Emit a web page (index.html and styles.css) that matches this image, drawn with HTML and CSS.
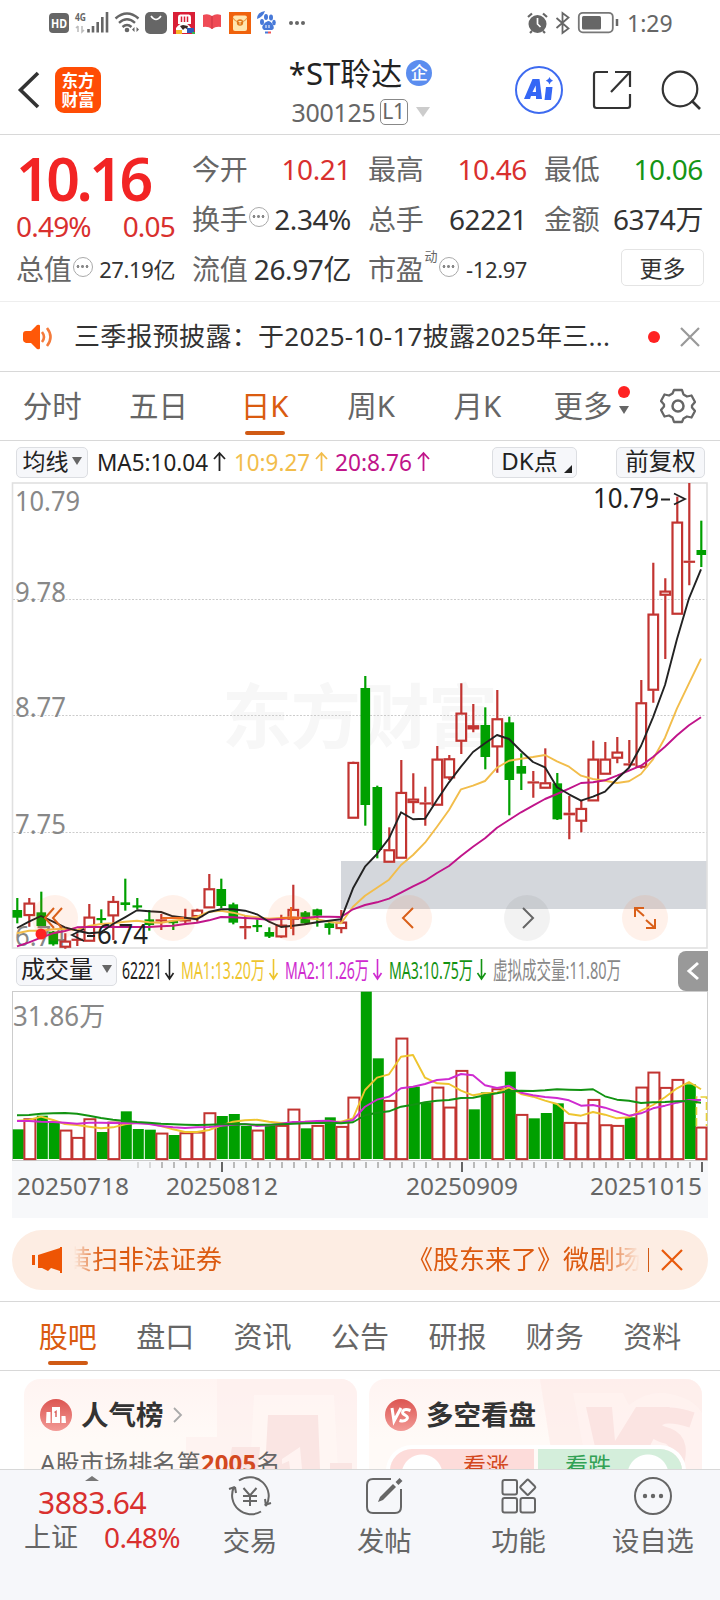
FILE: index.html
```html
<!DOCTYPE html>
<html lang="zh-CN">
<head>
<meta charset="utf-8">
<title>*ST聆达 300125</title>
<link rel="stylesheet" href="styles.css">
</head>
<body>
<div class="statusbar">
  <svg class="status-left" width="260" height="30" viewBox="48 8 260 30">
    <rect x="49" y="13" width="20" height="20" rx="4" fill="#666"/>
    <text x="51" y="28" font-size="13" font-weight="700" fill="#fff" textLength="16" lengthAdjust="spacingAndGlyphs">HD</text>
    <text x="75" y="21" font-size="11" font-weight="700" fill="#666" textLength="11" lengthAdjust="spacingAndGlyphs">4G</text>
    <path d="M78 26v6m-2-4l2-2M82 26v6l2-2" stroke="#bbb" stroke-width="1.5" fill="none"/>
    <path d="M88.500 29v3.500M93 26v6.500M97.700 22v10.500M102.300 17v15.500M107 12v20.500" stroke="#666" stroke-width="2.600"/>
    <path d="M115.500 18.500q11.500-10 23 0M119 22.800q8-7 16 0M122.500 27q4.500-4 9 0" fill="none" stroke="#666" stroke-width="2.400"/>
    <circle cx="127" cy="30" r="2.300" fill="#666"/>
    <path d="M134.500 27v5l-2.500-2.500zM136.500 27v5l2.500-2.500z" fill="#666"/>
    <rect x="145" y="12" width="22" height="22" rx="5" fill="#666"/>
    <path d="M151 16q5 7 10 0" fill="none" stroke="#fff" stroke-width="1.600"/>
    <rect x="173" y="12" width="22" height="22" fill="#d91f36"/>
    <path d="M178 17q0-3 3-2.500h7q3-.5 3 2.500v7h-13z" fill="#fff"/><path d="M181.500 16.500v5.500m3-5.500v5.500m3-5.500v5.500" stroke="#d91f36" stroke-width="1.500"/>
    <path d="M176 28q8-10 15 0v5h-15z" fill="#fff"/><path d="M180 26l3-1 5 1-1 3-2-1-2 2z" fill="#3b2a26"/>
    <path d="M176 30h6v4h-6z" fill="#f7ba2a"/><path d="M187 28h7v5h-7z" fill="#2e5bb8"/><path d="M192 32h3v2h-3z" fill="#3cb44b"/>
    <path d="M203 15q5-2 9 1q4-3 9-1v12q-5-1-9 2q-4-3-9-2z" fill="#ef4b56"/><path d="M212 16v13" stroke="#c93542"/>
    <rect x="229" y="12" width="22" height="22" fill="#f0620c"/><rect x="233" y="15.500" width="14" height="15.500" rx="2" fill="#ffe6b0"/>
    <path d="M233 18q3 4 5 3.500M247 18q-3 4-5 3.500" fill="none" stroke="#e59a4a" stroke-width="1.200"/><circle cx="240" cy="22.500" r="3.200" fill="#e07a1c"/><path d="M238.500 21.500h3m-1.500 0v3" stroke="#ffe6b0"/>
    <g fill="#4779d8"><ellipse cx="262" cy="22" rx="2" ry="3"/><ellipse cx="266" cy="17" rx="2" ry="3"/><ellipse cx="271" cy="17.500" rx="2" ry="3"/><ellipse cx="274" cy="22.500" rx="1.800" ry="2.800"/><path d="M268 21q3 0 5 4t-1 5h-8q-3-2-1-5t5-4z"/><path d="M257 19q0-7 8-8q-2 6-8 8z"/></g>
    <path d="M266 25v3m3-3v3" stroke="#fff"/><path d="M265 32.500h3" stroke="#4779d8" stroke-width="2"/><path d="M268 32.500h3" stroke="#e55" stroke-width="2"/>
    <g fill="#666"><circle cx="291" cy="23" r="2"/><circle cx="297" cy="23" r="2"/><circle cx="303" cy="23" r="2"/></g>
  </svg>
  <svg class="status-right" width="96" height="26" viewBox="525 10 96 26">
    <circle cx="537.500" cy="24" r="9" fill="#666"/><path d="M537.500 18v6l3 3" fill="none" stroke="#fff" stroke-width="1.700"/>
    <path d="M528 17l4-3.500M547 17l-4-3.500M532 31l-2 2M543 31l2 2" stroke="#666" stroke-width="2.200"/>
    <path d="M556.500 18l12 10.500-6 4.500v-20l6 4.500-12 10.500" fill="none" stroke="#666" stroke-width="1.800"/>
    <rect x="578.800" y="12.800" width="34" height="19.500" rx="4" fill="none" stroke="#777" stroke-width="1.800"/><rect x="582" y="16" width="19" height="13.500" rx="1.500" fill="#666"/><path d="M617 19v7" stroke="#666" stroke-width="2.500"/>
  </svg>
  <span class="clock">1:29</span>
</div>

<header class="header">
  <svg class="back" width="24" height="38" viewBox="0 0 24 38"><path d="M22 2L4.500 19 22 36" fill="none" stroke="#333" stroke-width="3.600"/></svg>
  <div class="logo"><span>东方</span><span>财富</span></div>
  <div class="title">
    <div class="name">*ST聆达<span class="badge">企</span></div>
    <div class="code">300125<span class="level">L1</span><i class="caret"></i></div>
  </div>
  <div class="actions">
    <svg width="48" height="48" viewBox="0 0 48 48"><circle cx="24" cy="24" r="23" fill="none" stroke="#3e6bf0" stroke-width="2"/><path d="M9 33L17.500 13h7L27 33h-6v-3h-5l-1 3zM17.500 26h3.500l-.3-6.500z" fill="#3567f5" fill-rule="evenodd"/><path d="M31 21h6.500l-1.500 13h-6.500z" fill="#3567f5"/><path d="M34.500 11q.8 3 3.500 3.800-2.700.8-3.500 3.700-.8-2.900-3.700-3.700 2.900-.8 3.700-3.800z" fill="#3567f5"/></svg>
    <svg width="40" height="40" viewBox="0 0 40 40"><path d="M16 2H4.500Q2 2 2 4.500v31Q2 38 4.500 38h31q2.500 0 2.500-2.500V24M23 2h15v15M38 2L19 22" fill="none" stroke="#333" stroke-width="2.200"/></svg>
    <svg width="40" height="40" viewBox="0 0 40 40"><circle cx="19" cy="19" r="17.300" fill="none" stroke="#333" stroke-width="2.200"/><path d="M30.500 30.500l8.500 8.500" stroke="#333" stroke-width="2.600"/></svg>
  </div>
</header>

<section class="quote">
  <div class="last">
    <div class="price">10.16</div>
    <div class="change up"><span>0.49%</span><span>0.05</span></div>
  </div>
  <div class="cell"><label>今开</label><b class="up">10.21</b></div>
  <div class="cell"><label>最高</label><b class="up">10.46</b></div>
  <div class="cell"><label>最低</label><b class="down">10.06</b></div>
  <div class="cell"><label>换手</label><i class="info"></i><b>2.34%</b></div>
  <div class="cell"><label>总手</label><b>62221</b></div>
  <div class="cell"><label>金额</label><b>6374万</b></div>
  <div class="cell"><label>总值</label><i class="info"></i><b class="small">27.19亿</b></div>
  <div class="cell"><label>流值</label><b>26.97亿</b></div>
  <div class="cell"><label>市盈</label><sup>动</sup><i class="info"></i><b class="small">-12.97</b></div>
  <div class="cell end"><button class="more">更多</button></div>
</section>

<section class="notice">
  <svg width="32" height="26" viewBox="0 0 32 26"><path d="M4 7h5l6-6q3-1 3 1v22q0 2-3 1l-6-6H4q-3-1-3-3v-6q0-3 3-3z" fill="#ff5808"/><path d="M20 8q4 5 0 10M25 4q7 9 0 18" fill="none" stroke="#f47a3b" stroke-width="2.600"/></svg>
  <p>三季报预披露：于2025-10-17披露2025年三...</p>
  <i class="dot"></i>
  <svg class="close" width="20" height="20" viewBox="0 0 20 20"><path d="M1 1l18 18M19 1L1 19" stroke="#999" stroke-width="2.200"/></svg>
</section>

<nav class="periods">
  <a>分时</a><a>五日</a><a class="active">日K</a><a>周K</a><a>月K</a>
  <a class="menu">更多<span class="mark"><i class="dot"></i><i class="caret"></i></span></a>
  <svg width="36" height="36" viewBox="-18 -18 36 36"><path d="M-4-16h8l1.500 4.500 3.500 2 4.500-1 3.500 6.500-3 3.500v2l3 3.500-3.500 6.500-4.500-1-3.500 2L4 16h-8l-1.500-4.500-3.500-2-4.500 1-3.500-6.500 3-3.500v-2l-3-3.500 3.500-6.500 4.500 1 3.500-2z" fill="none" stroke="#666" stroke-width="2.300" stroke-linejoin="round"/><circle r="5.500" fill="none" stroke="#666" stroke-width="2.500"/></svg>
</nav>

<div class="maline">
  <button class="chip">均线<i class="caret"></i></button>
  <svg class="ma" width="336" height="32" viewBox="97 446 336 32" font-size="24">
    <text x="97" y="470" fill="#222" textLength="111" lengthAdjust="spacingAndGlyphs">MA5:10.04</text>
    <text x="234" y="470" fill="#f2bd4b" textLength="76" lengthAdjust="spacingAndGlyphs">10:9.27</text>
    <text x="335" y="470" fill="#c0148a" textLength="77" lengthAdjust="spacingAndGlyphs">20:8.76</text>
    <g fill="none" stroke-width="1.800"><path d="M219.500 470v-18m-5.500 6l5.500-6 5.500 6" stroke="#222"/><path d="M321.500 470v-18m-5.500 6l5.500-6 5.500 6" stroke="#f2bd4b"/><path d="M423.500 470v-18m-5.500 6l5.500-6 5.500 6" stroke="#c0148a"/></g>
  </svg>
  <button class="chip dk">DK点<i class="corner"></i></button>
  <button class="chip fq">前复权</button>
</div>

<svg class="price-chart" id="price" width="720" height="468" viewBox="0 482 720 468"></svg>

<div class="volline">
  <button class="chip">成交量<i class="caret"></i></button>
  <svg width="502" height="32" viewBox="122 954 502 32" font-size="24">
    <text x="122" y="978" fill="#222" textLength="40" lengthAdjust="spacingAndGlyphs">62221</text>
    <text x="181" y="978" fill="#eec52e" textLength="84" lengthAdjust="spacingAndGlyphs">MA1:13.20万</text>
    <text x="285" y="978" fill="#cf2bd0" textLength="84" lengthAdjust="spacingAndGlyphs">MA2:11.26万</text>
    <text x="389" y="978" fill="#129312" textLength="84" lengthAdjust="spacingAndGlyphs">MA3:10.75万</text>
    <text x="493" y="978" fill="#888" textLength="128" lengthAdjust="spacingAndGlyphs">虚拟成交量:11.80万</text>
    <g fill="none" stroke-width="1.600"><path d="M169.500 958v20m-4-6l4 6 4-6" stroke="#222"/><path d="M273.500 958v20m-4-6l4 6 4-6" stroke="#eec52e"/><path d="M377.500 958v20m-4-6l4 6 4-6" stroke="#cf2bd0"/><path d="M481.500 958v20m-4-6l4 6 4-6" stroke="#129312"/></g>
  </svg>
  <div class="drawer"><svg width="14" height="20" viewBox="0 0 14 20"><path d="M12 2L3 10l9 8" fill="none" stroke="#fff" stroke-width="3"/></svg></div>
</div>

<svg class="vol-chart" id="volume" width="720" height="227" viewBox="0 991 720 227"></svg>

<section class="banner">
  <svg width="30" height="26" viewBox="0 0 30 26"><path d="M0 8h3v10H0zM6 8L28 1V0h3v26h-3v-2l-9-3-3 3-6-3H6z" fill="#ee5504"/></svg>
  <div class="marquee"><span>黄扫非法证券</span><span>《股东来了》微剧场</span></div>
  <i class="bar"></i>
  <svg width="22" height="22" viewBox="0 0 22 22"><path d="M1 1l20 20M21 1L1 21" stroke="#e8590c" stroke-width="2.200"/></svg>
</section>

<nav class="sections"><a class="active">股吧</a><a>盘口</a><a>资讯</a><a>公告</a><a>研报</a><a>财务</a><a>资料</a></nav>

<main class="cards">
  <article class="card">
    <svg class="art" width="333" height="90" viewBox="0 0 333 90"><path d="M193 0h140v90H162V58h31z" fill="#fdeeec" opacity=".6"/><path d="M230 16h80l4 74h-88z" fill="#fff6f4" opacity=".8"/><path d="M244 36h50l2 54h-55zM208 68h28l-2 22h-30zM306 84h22v6h-22z" fill="#fae5e3"/><path d="M258 80l18-12 2 22h-12l-1-8-7 3z" fill="#fff3f1"/></svg>
    <h3><svg width="32" height="32" viewBox="0 0 32 32"><defs><linearGradient id="g" x2="0" y2="1"><stop stop-color="#dc5551"/><stop offset="1" stop-color="#f29a96"/></linearGradient></defs><circle cx="16" cy="16" r="16" fill="url(#g)"/><path d="M6.500 13h4v11h-4.500zM12 8h8v16h-8zM21.500 17h4l.5 7h-4.500z" fill="#fff"/><path d="M14.500 13.500l1.500-1v5.500" fill="none" stroke="#dc6662" stroke-width="1.500"/></svg>人气榜<svg width="10" height="16" viewBox="0 0 10 16"><path d="M1 1l7 7-7 7" fill="none" stroke="#aaa" stroke-width="1.800"/></svg></h3>
    <p>A股市场排名第<strong>2005</strong>名</p>
  </article>
  <article class="card">
    <svg class="art" width="333" height="90" viewBox="0 0 333 90"><path d="M171 0h162v90H185z" fill="#fdecea" opacity=".75"/><path d="M204 14h50l6 12q18-14 36-12 28 4 37 20v56H218z" fill="#fff3f1" opacity=".6"/><path d="M217 28h26l3 34 21-34h34l-32 62h-38z" fill="#fbe4e2"/><path d="M323 41q-30-10-38 2-3 10 14 14 16 6 6 33" fill="none" stroke="#fbe4e2" stroke-width="16"/></svg>
    <h3><svg width="32" height="32" viewBox="0 0 32 32"><circle cx="16" cy="16" r="16" fill="url(#g)"/><path d="M7 9l2 13L16 9M25.500 11.500q-6-2-7.500.5t2 4q4 2 1.500 4.500t-7 1" fill="none" stroke="#fff" stroke-width="3"/></svg>多空看盘</h3>
    <div class="vote"><span class="rise">看涨</span><span class="fall">看跌</span></div>
  </article>
</main>

<footer class="dock">
  <div class="index"><i class="tri"></i><div class="pt">3883.64</div><div class="line"><span>上证</span><em>0.48%</em></div></div>
  <a><svg width="44" height="40" viewBox="-22 -20 44 40" fill="none" stroke="#666" stroke-width="2"><path d="M-11-15.500A19 19 0 0 1 16 10m-1.500-1l6.500-2M16 10l-1-7M11 15.500A19 19 0 0 1-16-9m-5 2l6-2m1 6l-1-6"/><path d="M-6.500-8L0-.5 6.500-8M0-.5V10M-7 0H7M-7 5H7"/></svg>交易</a>
  <a><svg width="40" height="40" viewBox="-20 -20 40 40" fill="none" stroke="#666" stroke-width="2"><path d="M7-17h-18q-6 0-6 6v22q0 6 6 6h22q6 0 6-6V-7"/><path d="M-6 6l2-5L9-12l3 3L-1 4z" fill="#666" stroke="none"/><path d="M13-12.500L17-16.500" stroke-width="4"/></svg>发帖</a>
  <a><svg width="40" height="40" viewBox="-20 -20 40 40" fill="none" stroke="#666" stroke-width="2"><rect x="-16.500" y="-16" width="14.500" height="14.500" rx="2"/><rect x="-16.500" y="2" width="14.500" height="14.500" rx="2"/><rect x="1.500" y="2" width="14.500" height="14.500" rx="2"/><rect x="3" y="-14.500" width="11.500" height="11.500" rx="1.500" transform="rotate(45 8.750 -8.750)"/></svg>功能</a>
  <a><svg width="40" height="40" viewBox="-20 -20 40 40"><circle r="18" fill="none" stroke="#666" stroke-width="2"/><g fill="#666"><circle cx="-8" r="2.200"/><circle r="2.200"/><circle cx="8" r="2.200"/></g></svg>设自选</a>
</footer>
<script src="chart.js"></script>
</body>
</html>
```
FILE: styles.css
```css
* { box-sizing: border-box; }
body {
  margin: 0;
  width: 720px;
  height: 1600px;
  overflow: hidden;
  display: flex;
  flex-direction: column;
  background: #fff;
  color: #333;
  font-family: "Noto Sans", "Noto Sans CJK SC", sans-serif;
}
body > * { flex: none; }
svg { display: block; flex: none; }
i, em { font-style: normal; }
p, h3 { margin: 0; }
button { font-family: inherit; padding: 0; margin: 0; }
.up { color: #d9302e; }
.down { color: #159515; }
.caret { display: block; width: 0; height: 0; border: 5px solid transparent; border-bottom: 0; border-top: 8px solid #666; }
.dot { display: block; width: 12px; height: 12px; border-radius: 50%; background: #f22; }

.statusbar { height: 46px; display: flex; align-items: center; padding-left: 48px; }
.status-right { margin-left: 217px; }
.clock { margin-left: 6px; font-size: 23px; line-height: 30px; color: #666; }

.header { height: 89px; display: flex; align-items: center; border-bottom: 1px solid #d8d8d8; padding: 0 19px 0 16px; }
.logo { width: 46px; height: 46px; margin-left: 15px; border-radius: 9px; background: #ff4d05; color: #fff; font-size: 16.500px; font-weight: 700; line-height: 19px; display: flex; flex-direction: column; justify-content: center; align-items: center; }
.title { flex: none; width: 414px; padding: 3px 0 0 105px; display: flex; flex-direction: column; align-items: center; }
.name { display: flex; align-items: center; font-size: 31px; line-height: 40px; color: #222; }
.badge { width: 26px; height: 26px; margin-left: 4px; border-radius: 50%; background: #5b8def; color: #fff; font-size: 17px; line-height: 25px; text-align: center; font-weight: 500; }
.code { display: flex; align-items: center; font-size: 25px; line-height: 38px; letter-spacing: -.3px; color: #666; }
.level { width: 28px; height: 26px; margin: 0 8px 0 4px; border: 1.500px solid #888; border-radius: 5px; font-size: 21px; line-height: 23px; text-align: center; }
.code .caret { border-width: 10px 7px 0; border-top-color: #ccc; }
.actions { display: flex; align-items: center; gap: 29px; margin-left: auto; }

.quote { height: 167px; padding: 9px 17px 0 16px; border-bottom: 1px solid #eee; display: grid; grid-template-columns: repeat(4, 159px); grid-auto-rows: 50px; column-gap: 17px; }
.last { grid-row: span 2; }
.price { font-size: 59px; line-height: 68px; font-weight: 600; letter-spacing: -3.500px; color: #f22424; }
.change { display: flex; justify-content: space-between; font-size: 28px; line-height: 34px; letter-spacing: -.8px; margin-top: -3px; }
.cell { display: flex; align-items: center; justify-content: space-between; }
.cell label { font-size: 28px; line-height: 40px; color: #666; letter-spacing: -.2px; }
.cell b { font-weight: 400; font-size: 28px; line-height: 40px; letter-spacing: -.4px; white-space: nowrap; }
.cell b.small { font-size: 22px; }
.cell sup { font-size: 13px; line-height: 14px; color: #666; align-self: flex-start; margin: 5px 0 0 1px; }
.cell.end { justify-content: flex-end; }
.info { width: 20px; height: 20px; margin: -4px auto 0 1px; border: 1.500px solid #aaa; border-radius: 50%; background: radial-gradient(circle at 4px 8.500px, #888 1.200px, transparent 1.700px), radial-gradient(circle at 8.500px 8.500px, #888 1.200px, transparent 1.700px), radial-gradient(circle at 13px 8.500px, #888 1.200px, transparent 1.700px); }
.more { width: 83px; height: 37px; margin: -3px -1px 0 0; border: 1.500px solid #e4e4e4; border-radius: 5px; background: #fff; color: #333; font-size: 23px; line-height: 32px; }

.notice { height: 70px; display: flex; align-items: center; padding: 0 20px 0 22px; border-bottom: 1px solid #d8d8d8; }
.notice p { width: 573px; padding-left: 20px; margin-top: -2px; font-size: 26px; line-height: 40px; letter-spacing: .28px; white-space: nowrap; }
.notice .dot { margin-left: 21px; }
.notice .close { margin-left: auto; }

.periods { height: 69px; display: flex; align-items: center; border-bottom: 1px solid #d8d8d8; }
.periods a, .sections a { position: relative; text-align: center; font-size: 29.500px; line-height: 68px; color: #666; }
.periods a { width: 106.300px; }
.periods a:first-child { margin-left: -1px; }
.periods .menu { width: 100px; margin-right: 30px; display: flex; padding-left: 23px; }
.mark { display: flex; flex-direction: column; align-items: center; gap: 10px; padding-top: 14px; margin-left: 5px; }
.mark .caret { margin-top: -2px; }
.periods .active, .sections .active { color: #da5b10; }
.periods .active::after, .sections .active::after { content: ""; position: absolute; left: 50%; bottom: 5px; width: 40px; height: 4px; margin-left: -20px; border-radius: 2px; background: #d05a14; }

.chip { display: flex; align-items: center; justify-content: center; gap: 4px; height: 31px; border: 1px solid #dcdee2; border-radius: 5px; background: #f6f7fa; color: #222; font-size: 24px; line-height: 26px; padding-bottom: 3px; }
.maline { height: 41px; display: flex; align-items: center; padding: 2px 15px 0 16px; }
.maline .chip:first-child { width: 72px; gap: 3px; margin-right: 9px; font-size: 23px; }
.maline .dk { width: 85px; margin-left: 59px; position: relative; padding-right: 10px; }
.corner { position: absolute; right: 4px; bottom: 4px; border: 4px solid #222; border-top-color: transparent; border-left-color: transparent; }
.fq { width: 89px; margin-left: auto; font-size: 23.500px; }

.volline { height: 41px; display: flex; align-items: center; padding: 0 12px 0 16px; }
.volline .chip { width: 101px; gap: 9px; margin-right: 5px; }
.drawer { width: 30px; height: 40px; margin-left: auto; border-radius: 8px 0 0 8px; background: #999; display: flex; align-items: center; justify-content: center; }

.banner { height: 60px; margin: 12px 12px 11px; padding: 0 25px 0 20px; border-radius: 30px; background: #fdede3; display: flex; align-items: center; }
.marquee { width: 565px; margin: -2px 0 0 12px; display: flex; justify-content: space-between; overflow: hidden; font-size: 26px; line-height: 40px; color: #dc5a10; white-space: nowrap; -webkit-mask-image: linear-gradient(90deg, transparent, #000 26px, #000 525px, transparent 566px); mask-image: linear-gradient(90deg, transparent, #000 26px, #000 525px, transparent 566px); }
.marquee span:first-child { margin-left: -8px; }
.marquee span:last-child { margin-right: -2px; }
.bar { width: 1px; height: 24px; background: #d05a14; margin: 0 auto 0 9px; }

.sections { height: 70px; display: flex; padding: 0 19px; border-top: 1px solid #d8d8d8; border-bottom: 1px solid #d8d8d8; }
.sections a { flex: 1; font-size: 29px; line-height: 70px; }

.cards { height: 98px; overflow: hidden; display: flex; gap: 12px; padding: 8px 18px 0 24px; }
.card { position: relative; flex: none; width: 333px; height: 180px; border-radius: 16px; overflow: hidden; background: linear-gradient(#fff4f2, #fffaf7 60px); padding: 16px 16px 0; }
.art { position: absolute; left: 0; top: 0; }
.card h3 { position: relative; display: flex; align-items: center; gap: 9px; font-size: 27.500px; line-height: 40px; font-weight: 700; color: #333; }
.card p { position: relative; margin-top: 10px; font-size: 24px; line-height: 36px; letter-spacing: .2px; color: #666; white-space: nowrap; }
.card strong { color: #d3491f; }
.vote { position: relative; display: flex; gap: 4px; margin: 14px 0 0 5px; width: 292px; height: 44px; border-radius: 22px; overflow: hidden; box-shadow: 0 0 0 4px #fff; font-size: 23px; line-height: 33px; text-align: center; }
.vote span { flex: 1; }
.vote .rise { flex: none; width: 144px; background: radial-gradient(circle at 32px 26px, #fff 20px, transparent 21px), #fddcda; color: #d3491f; padding-left: 48px; }
.vote .fall { background: radial-gradient(circle at 110px 26px, #fff 20px, transparent 21px), #d4eedb; color: #32a155; padding-right: 44px; }

.dock { height: 131px; border-top: 1px solid #d8d8d8; background: #f6f7fa; display: flex; color: #666; }
.dock a { width: 134.300px; padding-top: 6px; display: flex; flex-direction: column; align-items: center; gap: 6px; font-size: 27.300px; line-height: 38px; }
.index { width: 183px; padding-top: 6px; }
.tri { display: block; width: 0; margin-left: 85px; border: 7px solid transparent; border-top: 0; border-bottom: 5px solid #777; }
.pt { margin: 4px 0 0 38px; font-size: 30px; line-height: 36px; letter-spacing: -.4px; color: #d9302e; }
.line { display: flex; gap: 26px; padding-left: 24px; font-size: 27px; line-height: 32px; }
.line em { color: #d9302e; font-size: 28px; letter-spacing: -.6px; }
```
FILE: chart.js
```js
const NS = "http://www.w3.org/2000/svg";
const X0 = 17, STEP = 12;
const RED = "#c23431", GREEN = "#00a000";

function el(parent, tag, attrs, text) {
  const n = document.createElementNS(NS, tag);
  for (const k in attrs) n.setAttribute(k, attrs[k]);
  if (text) n.textContent = text;
  parent.appendChild(n);
  return n;
}
// values are thirds of a pixel below the given top
const at = (top, list) => list.map(v => top + v / 3);
const x = i => X0 + i * STEP;
function line(svg, ys, color) {
  el(svg, "polyline", { points: ys.map((y, i) => x(i) + "," + y.toFixed(1)).join(" "), fill: "none", stroke: color, "stroke-width": 1.9, "stroke-linejoin": "round" });
}
function label(svg, px, y, width, text, color, size) {
  el(svg, "text", { x: px, y, textLength: width, lengthAdjust: "spacingAndGlyphs", fill: color, "font-size": size }, text);
}

// colour, high, body top, body bottom, low
const early = `g774,810,833,850 r774,789,827,860 g755,817,858,858 g873,875,913,917 r880,903,922,926 r880,896,900,918 r792,831,904,904 g808,834,838,850 r768,784,828,900 g716,787,795,812 g774,796,799,808 g810,838,855,872 r822,838,842,870 g840,843,848,870 r806,838,842,850 r806,810,830,845 r702,746,804,804 g716,747,798,804 g788,793,848,853 r828,858,865,898 g838,855,860,876 g862,876,890,894 r824,855,891,893 r734,808,838,886 g813,817,850,854 g806,808,827,860 g840,850,864,884 r810,846,866,880`;
const late = `r875,877,1045,1045 g618,654,1005,1067 g947,951,1140,1165 r1072,1139,1177,1177 r870,967,1165,1165 r910,987,998,1030 r950,997,1002,1067 r828,867,1006,1006 r855,866,924,930 r640,729,814,852 r702,767,777,787 g712,765,861,898 r660,746,831,908 g740,757,930,1036 g850,888,911,960 r903,934,940,983 r835,938,955,955 g909,940,1048,1050 r978,1028,1036,1108 r990,1015,1054,1087 r812,867,993,993 r816,867,913,913 r801,846,865,880 r810,880,886,890 r630,698,892,896 r278,432,661,698 r325,363,376,567 r80,156,433,433 r39,272,278,346 g152,240,255,291`;
const parse = (top, s) => s.split(" ").map(c => ({ red: c[0] === "r", y: at(top, c.slice(1).split(",").map(Number)) }));
const candles = parse(640, early).concat(parse(470, late));

const ma5 = at(640, [864,845,828,845,862,872,880,877,852,832,811,814,816,829,833,838,816,808,808,812,823,845,861,857,853,847,842,838])
  .concat(at(840, [145,80,42]), at(470, [1105,1027,1048,1046,990,937,890,846,820,795,807,843,876,892,952,973,992,980,965,927,893,828,742,645,507,385,298]));
const ma10 = at(640, [880,872,872,868,866,870,858,852,850,845,842,847,848,842,838,830,815,812,818,827,832,836,834,832,834,838,845,850])
  .concat(at(840, [200,167,143,119,75]), at(470, [1155,1118,1070,1020,958,947,933,893,872,866,861,855,874,890,917,927,932,939,934,912,868,803,715,640,566]));
const ma20 = at(640, [919,907,893,880,873,862,861,861,861,861,861,861,859,857,852,848,841,831,832,834,836,839,837,833,834,830,830,831])
  .concat(at(840, [208,195,187,176,158,139,122,99,78,48]), at(470, [1130,1105,1073,1050,1027,1007,987,972,956,939,937,931,917,902,887,861,830,796,766,742]));

const p = document.getElementById("price");
el(p, "text", { x: 222, y: 743, textLength: 276, "font-size": 70, "font-weight": 700, fill: "#f7f7f7" }, "东方财富");
[599.5, 715.5, 832.5].forEach(y => el(p, "path", { d: `M13 ${y}H707`, stroke: "#ccc", "stroke-dasharray": "2 1.5" }));
el(p, "rect", { x: 341, y: 861, width: 366, height: 48, fill: "#d4d7dc" });
el(p, "rect", { x: 12.5, y: 483, width: 694.5, height: 465, fill: "none", stroke: "#e0e0e0", "stroke-width": 1.6 });
label(p, 15, 511, 65, "10.79", "#888", 27);
label(p, 15, 602, 51, "9.78", "#888", 27);
label(p, 15, 717, 51, "8.77", "#888", 27);
label(p, 15, 834, 51, "7.75", "#888", 27);
label(p, 15, 946, 51, "6.74", "#888", 27);
candles.forEach((c, i) => {
  const [h, t, b, l] = c.y, cx = x(i) + .3, color = c.red ? RED : GREEN;
  el(p, "path", { d: c.red ? `M${cx} ${h}V${t}M${cx} ${b}V${l}` : `M${cx} ${h}V${l}`, stroke: color, "stroke-width": 2.2 });
  if (c.red && b - t > 3) el(p, "rect", { x: cx - 4.8, y: t + .6, width: 9.6, height: b - t - 1.2, fill: "none", stroke: color, "stroke-width": 2.2 });
  else el(p, "rect", { x: cx - (c.red ? 5.8 : 4.8), y: t, width: c.red ? 11.6 : 9.6, height: Math.max(b - t, 2.2), fill: color });
});
line(p, ma10, "#f2bd4b");
line(p, ma20, "#c0148a");
line(p, ma5, "#222");
label(p, 593, 508, 66, "10.79", "#222", 27);
el(p, "path", { d: "M661 499.500h9M674 493.500l11 5.500-11 5.500", fill: "none", stroke: "#222", "stroke-width": 1.8 });
label(p, 97, 944, 51, "6.74", "#222", 27);
el(p, "path", { d: "M84 929l-12 6 12 6M87 936h8", fill: "none", stroke: "#222", "stroke-width": 1.8 });
[55, 173, 291, 409, 527, 645].forEach(cx => el(p, "circle", { cx, cy: 918, r: 23, fill: cx === 527 ? "#000" : "#ff6414", opacity: cx === 527 ? .05 : .09 }));
el(p, "circle", { cx: 41, cy: 934, r: 5.5, fill: "#f22" });
const icon = (d, color) => el(p, "path", { d, fill: "none", stroke: color, "stroke-width": 2 });
icon("M54 908l-9 10 9 10M62 908l-9 10 9 10", "#d9601a");
icon("M162 918h22M280 918h22M291 907v22", "#ee6a20");
icon("M413 908l-10 10 10 10", "#d9601a");
icon("M523 908l10 10-10 10", "#666");
icon("M635 917v-9h9M635 908l9 8M646 920l9 8M655 919v9h-9", "#d9601a");

const v = document.getElementById("volume");
const tops = at(940, [568,535,527,545,569,591,535,576,545,514,567,569,578,585,577,575,517,528,522,558,569,555,555,506,565,555,532,558])
  .concat(at(840, [770,455,655,780,593,740,787,740,800,690,808,757,745,695,822,835,819,790,846,847,777,853,855,832,740,695,741,717,733,860]));
const greens = new Set([0,2,3,7,9,10,11,13,17,18,19,21,24,26,29,30,33,34,38,39,41,43,44,45,51,56]);
el(v, "rect", { x: 12, y: 1161, width: 696, height: 57, fill: "#f7f8fa" });
el(v, "rect", { x: 12.5, y: 991.5, width: 695, height: 169, fill: "none", stroke: "#ccc" });
label(v, 13, 1026, 92, "31.86万", "#888", 27);
tops.forEach((t, i) => {
  if (greens.has(i)) el(v, "rect", { x: x(i) - 4.2, y: t, width: 11, height: 1159 - t, fill: GREEN });
  else el(v, "rect", { x: x(i) - 4.6, y: t + .9, width: i === 57 ? 10 : 11, height: 1158.2 - t, fill: "#fff", stroke: RED, "stroke-width": 2 });
});
el(v, "path", { d: "M696.5 1126v-29h10v29", fill: "none", stroke: "#e8cf3a", "stroke-width": 1.6, "stroke-dasharray": "8 3" });
line(v, at(940, [542,540,530,540,552,555,560,565,562,553,548,550,558,568,576,576,570,557,545,541,539,545,549,549,545,545,545,545])
  .concat(at(840, [835,750,713,703,650,645,713,730,732,752,766,760,758,742,762,770,782,792,822,827,816,824,835,832,812,795,772,745,726,748])), "#eec52e");
line(v, at(940, [543,543,545,546,548,551,548,548,549,550,550,552,558,562,564,562,561,557,554,552,558,556,551,546,545,543,542,548])
  .concat(at(840, [840,800,779,770,745,740,732,720,717,702,706,736,744,737,758,766,771,774,781,797,795,803,815,827,820,805,797,788,780,780])), "#cf2bd0");
line(v, at(940, [526,525,521,520,519,521,527,534,539,543,546,548,551,553,554,555,554,553,552,553,554,554,553,551,550,549,548,550])
  .concat(at(840, [847,826,818,814,800,794,787,782,780,774,773,766,760,753,752,753,751,748,749,750,748,769,779,782,789,787,786,784,783,788])), "#129312");
for (let tx = 138; tx <= 702; tx += 12) {
  const major = [222, 462, 702].includes(tx);
  el(v, "path", { d: `M${tx} 1162v${major ? 10 : 6}`, stroke: major ? "#666" : "#aaa", "stroke-width": major ? 2 : 1.6, opacity: tx < 155 ? .5 : 1 });
}
label(v, 17, 1195, 112, "20250718", "#666", 24);
label(v, 166, 1195, 112, "20250812", "#666", 24);
label(v, 406, 1195, 112, "20250909", "#666", 24);
label(v, 590, 1195, 112, "20251015", "#666", 24);
```
